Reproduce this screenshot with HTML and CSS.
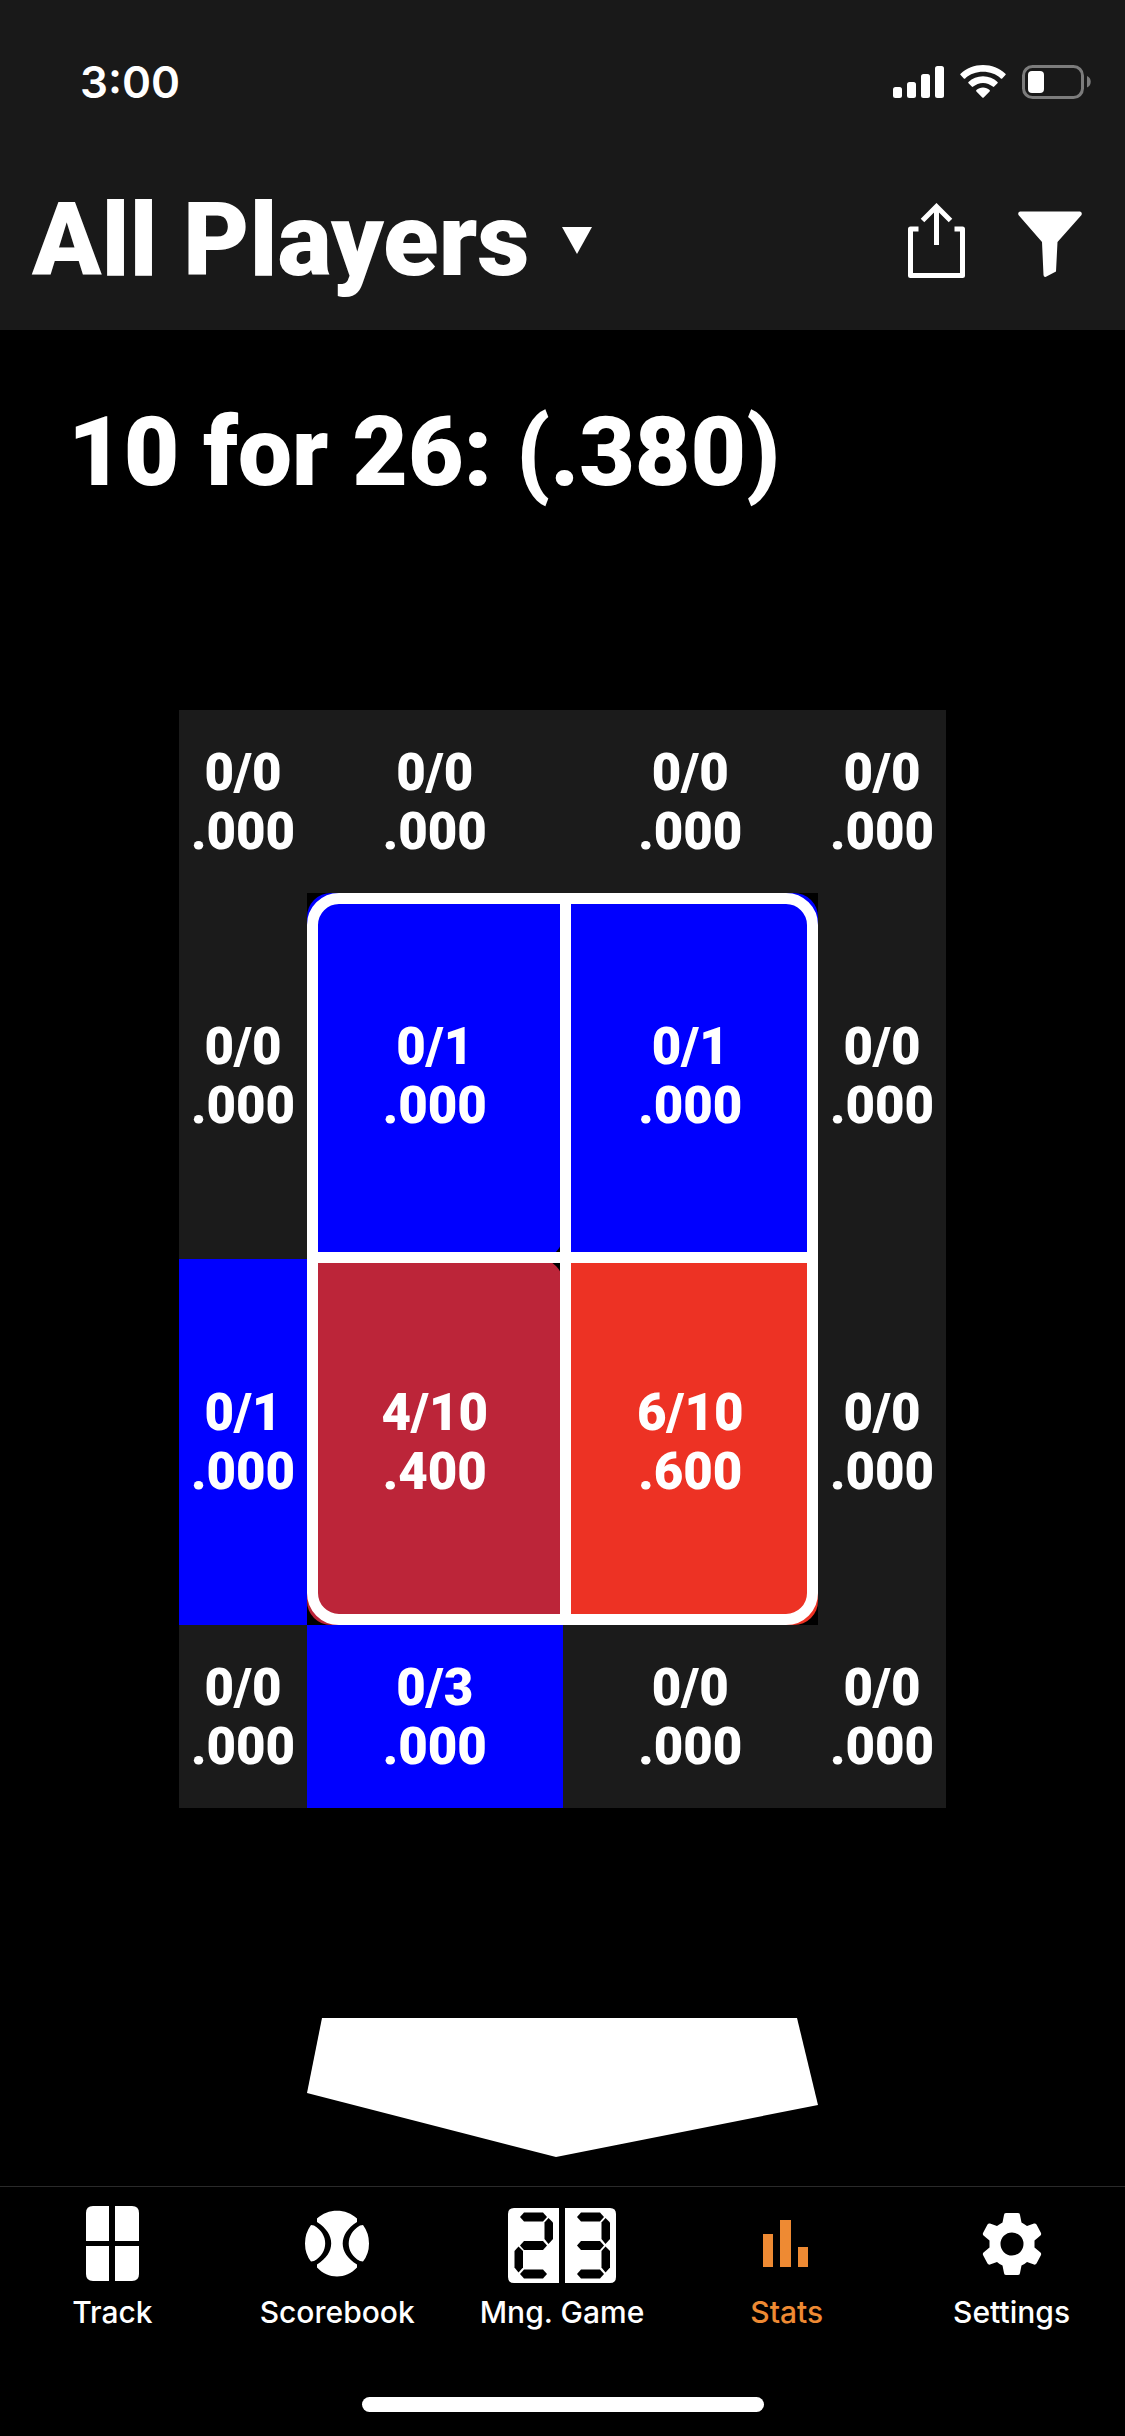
FILE: index.html
```html
<!DOCTYPE html>
<html lang="en">
<head>
<meta charset="utf-8">
<meta name="viewport" content="width=device-width, initial-scale=1">
<title>Stats</title>
<link rel="stylesheet" href="styles.css">
</head>
<body>
<header class="header">
  <div class="status">
    <time class="clock">3:00</time>
    <div class="status-icons">
      <svg width="51" height="34" viewBox="0 0 51 34" fill="#fff" aria-label="Signal">
        <rect x="0" y="22" width="9" height="11" rx="2.5"/>
        <rect x="14" y="17" width="9" height="16" rx="2.5"/>
        <rect x="28" y="9" width="9" height="24" rx="2.5"/>
        <rect x="42" y="1" width="9" height="32" rx="2.5"/>
      </svg>
      <svg width="46" height="34" viewBox="0 0 46 34" fill="#fff" aria-label="Wi-Fi">
        <path d="M23 0C14.500 0 6.500 3.300.6 8.700q-.7.7 0 1.400l3.200 3.300q.7.700 1.400 0C10 9 16.300 6.800 23 6.800S36 9 40.800 13.400q.7.700 1.400 0l3.200-3.300q.7-.7 0-1.400C39.500 3.300 31.500 0 23 0Z"/>
        <path d="M23 11.300c-5.600 0-10.700 2.100-14.500 5.600q-.7.700 0 1.400l3.300 3.300q.7.700 1.400 0c2.700-2.300 6-3.700 9.800-3.700s7.100 1.400 9.800 3.700q.7.700 1.400 0l3.300-3.300q.7-.7 0-1.400C33.700 13.400 28.600 11.300 23 11.300Z"/>
        <path d="M23 22.600c-2.500 0-4.800.9-6.600 2.400q-.7.700 0 1.400l5.900 6q.7.700 1.400 0l5.900-6q.7-.7 0-1.400c-1.800-1.500-4.100-2.400-6.600-2.400Z"/>
      </svg>
      <svg width="70" height="34" viewBox="0 0 70 34" aria-label="Battery">
        <rect x="1.500" y="1.500" width="59" height="31" rx="9" fill="none" stroke="#7c7c7c" stroke-width="3"/>
        <rect x="6" y="6" width="16" height="22" rx="4" fill="#fff"/>
        <path d="M65 11c5 2 5 9.500 0 11.500Z" fill="#7c7c7c"/>
      </svg>
    </div>
  </div>
  <div class="titlebar">
    <h1 class="title">
      <button class="picker" type="button">All Players
        <svg width="30" height="27" viewBox="0 0 30 27" aria-hidden="true"><path d="M0 0h30L15 27Z" fill="#fff"/></svg>
      </button>
    </h1>
    <div class="actions">
      <button class="action" type="button" aria-label="Share">
        <svg width="58" height="75" viewBox="0 0 58 75" fill="none" stroke="#fff" stroke-width="5">
          <path d="M10.500 26H2.500V72.500H54.500V26H46.500" stroke-linejoin="round"/>
          <path d="M28.500 42V4M14.500 17.500L28.500 3.500L42.500 17.500"/>
        </svg>
      </button>
      <button class="action" type="button" aria-label="Filter">
        <svg width="64" height="75" viewBox="0 0 64 75" fill="#fff">
          <path d="M2 8.500H62Q64.500 9 63.500 12L39.500 39L38 68.500L27.500 74Q25.500 74 25.500 72L24 39L.5 12Q-.5 9 2 8.500Z"/>
        </svg>
      </button>
    </div>
  </div>
</header>

<main class="main">
  <h2 class="summary">10 for 26: (.380)</h2>
  <div class="field">
    <div class="zones">
      <table class="grid">
        <colgroup><col class="col-edge"><col><col><col class="col-edge"></colgroup>
        <tbody>
          <tr class="row-edge"><td>0/0<br>.000</td><td>0/0<br>.000</td><td>0/0<br>.000</td><td>0/0<br>.000</td></tr>
          <tr class="row-inner"><td>0/0<br>.000</td><td class="strike strike-tl cold">0/1<br>.000</td><td class="strike strike-tr cold">0/1<br>.000</td><td>0/0<br>.000</td></tr>
          <tr class="row-inner"><td class="ball-cold">0/1<br>.000</td><td class="strike strike-bl warm">4/10<br>.400</td><td class="strike strike-br hot">6/10<br>.600</td><td>0/0<br>.000</td></tr>
          <tr class="row-edge"><td>0/0<br>.000</td><td class="ball-cold">0/3<br>.000</td><td>0/0<br>.000</td><td>0/0<br>.000</td></tr>
        </tbody>
      </table>
      <div class="frame"></div>
    </div>
    <svg class="plate" viewBox="0 0 511 139" aria-label="Home plate"><path d="M15 0H490L511 87L249 139L0 75Z" fill="#fff"/></svg>
  </div>
</main>

<nav class="tabs">
  <div class="tab-list">
    <a class="tab" href="#track">
      <svg width="53" height="76" viewBox="0 0 53 76" fill="#fff" aria-hidden="true">
        <path d="M7 0H23V35H0V7Q0 0 7 0ZM29 0H46Q53 0 53 7V35H29ZM0 40H23V75H7Q0 75 0 68ZM29 40H53V68Q53 75 46 75H29Z"/>
      </svg>
      <span>Track</span>
    </a>
    <a class="tab" href="#scorebook">
      <svg width="64" height="76" viewBox="0 0 64 76" fill="#fff" aria-hidden="true">
        <path d="M12 12.500C23 2 41 2 52 12.500L52 16C33 28 33 47 52 58.500L52 61.500C41 73.500 23 73.500 12 61.500L12 58.500C31 47 31 28 12 16Z"/>
        <path d="M6 19L9 19.500C24 28 24 47 9 55L6 55.500Q0 48 0 37.500T6 19ZM58 19L55 19.500C40 28 40 47 55 55L58 55.500Q64 48 64 37.500T58 19Z"/>
      </svg>
      <span>Scorebook</span>
    </a>
    <a class="tab" href="#game">
      <svg width="108" height="76" viewBox="0 0 108 76" aria-hidden="true">
        <path d="M6 2H51V77H6Q0 77 0 71V8Q0 2 6 2ZM57 2H102Q108 2 108 8V71Q108 77 102 77H57Z" fill="#fff"/>
        <g fill="#000">
          <path id="h" d="M12 11L16 6.500H35L39 11L35 15.500H16Z"/>
          <use href="#h" y="28.500"/><use href="#h" y="57"/>
          <use href="#h" x="57"/><use href="#h" x="57" y="28.500"/><use href="#h" x="57" y="57"/>
          <path id="v" d="M40.500 12L45 16.500V33L40.500 38L36.500 33V16.500Z"/>
          <use href="#v" x="-30" y="28.500"/>
          <use href="#v" x="57"/><use href="#v" x="57" y="28.500"/>
        </g>
      </svg>
      <span>Mng. Game</span>
    </a>
    <a class="tab tab-active" href="#stats" aria-current="page">
      <svg width="48" height="76" viewBox="0 0 48 76" fill="currentColor" aria-hidden="true">
        <path d="M0 28H10V61H0ZM17 14H28V61H17ZM35 41H45V61H35Z"/>
      </svg>
      <span>Stats</span>
    </a>
    <a class="tab" href="#settings">
      <svg width="60" height="76" viewBox="0 0 60 76" fill="#fff" aria-hidden="true">
        <path fill-rule="evenodd" d="M24 7H36Q38 7 38 9L39.500 16.500Q42.500 18 45 20L52 17.500Q53.500 17 54.500 18.500L59 27Q59.500 28.500 58.500 29.500L52.500 34.500V41.500L58.500 46.500Q59.500 47.500 59 49L54.500 57.500Q53.500 59 52 58.500L45 56Q42.500 58 39.500 59.500L38 67Q38 69 36 69H24Q22 69 22 67L20.500 59.500Q17.500 58 15 56L8 58.500Q6.500 59 5.500 57.500L1 49Q.5 47.500 1.500 46.500L7.500 41.500V34.500L1.500 29.500Q.5 28.500 1 27L5.500 18.500Q6.500 17 8 17.500L15 20Q17.500 18 20.500 16.500L22 9Q22 7 24 7ZM30 26.500A11.500 11.500 0 1 0 30 49.500A11.500 11.500 0 1 0 30 26.500Z"/>
      </svg>
      <span>Settings</span>
    </a>
  </div>
  <div class="home-indicator"></div>
</nav>
</body>
</html>
```
FILE: styles.css
```css
* { box-sizing: border-box; }

body {
  margin: 0;
  min-height: 100vh;
  display: flex;
  flex-direction: column;
  background: #000;
  color: #fff;
  font-family: Roboto, "Liberation Sans", sans-serif;
}

svg { display: block; flex: none; }

button {
  padding: 0;
  border: 0;
  background: none;
  color: inherit;
  font: inherit;
}

.header { background: #191919; }

.status {
  display: flex;
  justify-content: space-between;
  align-items: center;
  height: 132px;
  padding: 32px 33px 0 80px;
}

.clock {
  font: 600 44px/60px Inter, sans-serif;
}

.status-icons { display: flex; gap: 16px; }

.titlebar {
  display: flex;
  justify-content: space-between;
  align-items: center;
  padding: 48px 43px 30px 32px;
}

.title { margin: 0; font-size: 102px; font-weight: 900; line-height: 120px; }

.picker { display: flex; align-items: center; gap: 32px; }

.actions { display: flex; gap: 52px; }

.main { flex: 1; padding: 66px 0 29px; }

.summary {
  margin: 0 0 202px;
  padding: 0 68px;
  font-size: 96px;
  font-weight: 900;
  line-height: 112px;
}

.field { padding: 0 179px; }

.zones { position: relative; }

.grid {
  width: 100%;
  table-layout: fixed;
  border-collapse: collapse;
  background: #1b1b1b;
  font-size: 51px;
  font-weight: 900;
  line-height: 59px;
  text-align: center;
}

.grid td { padding: 0; }

.col-edge { width: 128px; }
.row-edge { height: 183px; }
.row-inner { height: 366px; }

.ball-cold { background: #00f; }

/* Strike-zone cells: coloured fill with rounded corners over black */
.strike { position: relative; z-index: 0; background: #000; }

.strike::before {
  content: "";
  position: absolute;
  z-index: -1;
  inset: 0;
  background: var(--heat);
}

.strike-tl::before { border-radius: 24px 0 24px 0; }
.strike-tr::before { border-radius: 0 24px 0 0; }
.strike-bl::before { border-radius: 0 24px 0 24px; }
.strike-br::before { border-radius: 0 0 24px 0; }

.cold { --heat: #00f; }
.warm { --heat: #bc2539; }
.hot { --heat: #ed3224; }

/* White strike-zone outline laid over the cells */
.frame {
  position: absolute;
  inset: 183px 128px;
  border: 11px solid #fff;
  border-radius: 32px;
}

.frame::before,
.frame::after {
  content: "";
  position: absolute;
  background: #fff;
}

.frame::before { top: 0; bottom: 0; left: calc(50% - 3px); width: 11px; }
.frame::after { left: 0; right: 0; top: calc(50% - 7px); height: 11px; }

.plate { width: calc(100% - 256px); margin: 210px auto 0; }

.tabs {
  border-top: 1px solid #2a2a2a;
  background: #000;
}

.tab-list {
  display: grid;
  grid-template-columns: repeat(5, 1fr);
  padding: 19px 1px 0 0;
}

.tab {
  display: flex;
  flex-direction: column;
  align-items: center;
  gap: 12px;
  color: #fff;
  font: 500 30px/36px Inter, sans-serif;
  text-decoration: none;
}

.tab svg { overflow: visible; }

.tab-active { color: #ee8a33; }

.home-indicator {
  width: 402px;
  height: 15px;
  margin: 67px auto 24px;
  border-radius: 8px;
  background: #fff;
}
```
